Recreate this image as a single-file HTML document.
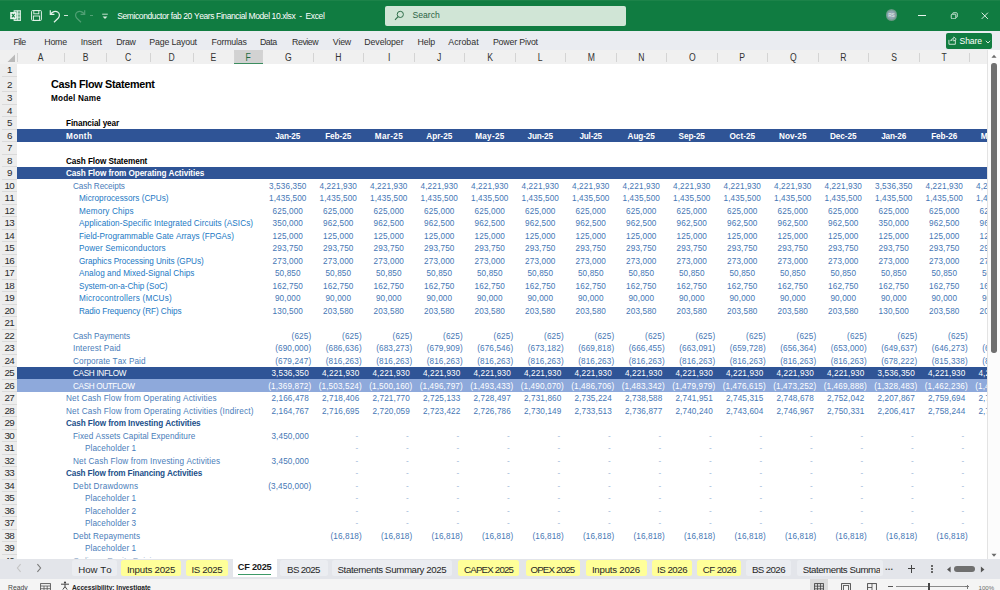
<!DOCTYPE html>
<html lang="en"><head><meta charset="utf-8"><title>Semiconductor fab 20 Years Financial Model 10.xlsx - Excel</title>
<style>
html,body{margin:0;padding:0;}
body{width:1000px;height:590px;overflow:hidden;position:relative;background:#fff;font-family:"Liberation Sans",sans-serif;font-kerning:none;}
div,span{box-sizing:border-box;}
.a{position:absolute;white-space:pre;}
.t{position:absolute;white-space:pre;line-height:1;}
#title{left:0;top:0;width:1000px;height:31px;background:#107C41;}
#ribbon{left:0;top:31px;width:1000px;height:19px;background:#EAECF1;}
.rt{position:absolute;top:37.1px;font-size:8.8px;color:#2f2f2f;white-space:pre;line-height:10px;}
#colhdr{left:0;top:50px;width:987px;height:13.5px;background:#F0F0F0;}
.ch{position:absolute;top:53.3px;font-size:10px;color:#2b2b2b;line-height:10px;text-align:center;white-space:pre;transform:scaleX(0.86);}
.cs{position:absolute;top:52.5px;width:1px;height:9.5px;background:#d4d4d4;}
#rowhdr{left:0;top:63.5px;width:17.5px;height:495px;background:#EDEDED;overflow:hidden;border-right:1px solid #cfcfcf;}
.rn{position:absolute;left:0.6px;width:17.5px;text-align:center;font-size:9.8px;color:#2b2b2b;line-height:12.5px;white-space:pre;letter-spacing:-0.7px;}
.rs{position:absolute;left:2px;width:15px;height:1px;background:#dadada;}
#sheet{left:17px;top:63.5px;width:970px;height:495.5px;overflow:hidden;background:#fff;}
.band{position:absolute;left:0;width:970px;}
.c{position:absolute;white-space:pre;line-height:12.5px;font-size:8.2px;}
.n{position:absolute;white-space:pre;line-height:12.5px;font-size:8.2px;text-align:right;width:50.5px;}
.nc{text-align:center;}
.m{position:absolute;white-space:pre;line-height:12.5px;font-size:8.2px;text-align:center;width:50.5px;color:#fff;font-weight:700;}
#tabs{left:0;top:558.5px;width:1000px;height:20.2px;background:#E3E5EA;}
.tab{position:absolute;top:560.4px;height:15.4px;font-size:9px;color:#262626;line-height:15.5px;text-align:center;white-space:pre;border-radius:2.5px;}
.y{background:#FFFF99;}
.tt{top:561.8px;text-align:left;background:none;}
.pill{background:#EBEDF1;}
#status{left:0;top:578.7px;width:1000px;height:11.3px;background:#F4F4F4;}
.st{position:absolute;font-size:6.8px;color:#444;line-height:8px;white-space:pre;}
</style></head><body>

<div id="title" class="a"></div>
<div class="a" style="left:0;top:0;width:1000px;height:1px;background:#1c8349"></div>
<svg class="a" style="left:10px;top:9.8px" width="11.2" height="11.2" viewBox="0 0 12 12">
<rect x="4.4" y="0.8" width="7" height="10.4" fill="#e4f2ea" fill-opacity="0.45" stroke="#e4f2ea" stroke-width="1"/>
<line x1="8" y1="0.8" x2="8" y2="11.2" stroke="#e4f2ea" stroke-width="0.9"/>
<line x1="4.4" y1="4.3" x2="11.4" y2="4.3" stroke="#e4f2ea" stroke-width="0.9"/>
<line x1="4.4" y1="7.7" x2="11.4" y2="7.7" stroke="#e4f2ea" stroke-width="0.9"/>
<rect x="0.2" y="2.2" width="6.6" height="7.6" fill="#e9f6ee"/>
<path d="M2 4.2 L5 7.9 M5 4.2 L2 7.9" stroke="#107C41" stroke-width="1.1" fill="none"/>
</svg>
<svg class="a" style="left:31px;top:10px" width="11" height="11" viewBox="0 0 11 11">
<rect x="0.6" y="0.6" width="9.8" height="9.8" rx="0.8" fill="none" stroke="#e4f2ea" stroke-width="1"/>
<rect x="2.8" y="0.6" width="5" height="3.2" fill="none" stroke="#e4f2ea" stroke-width="0.9"/>
<rect x="2.4" y="6" width="6.2" height="4.4" fill="none" stroke="#e4f2ea" stroke-width="0.9"/>
</svg>
<svg class="a" style="left:49.2px;top:9px" width="13" height="14.2" viewBox="0 0 12 13">
<path d="M1.2 1.2 V5 H5" fill="none" stroke="#e4f2ea" stroke-width="1.1"/>
<path d="M1.5 4.8 C3 2.2 6 1.5 8 2.7 C10.2 4 10 6.8 8.4 8.5 L4.6 12.2" fill="none" stroke="#e4f2ea" stroke-width="1.1"/>
</svg>
<div class="a" style="left:64.3px;top:14.5px;width:4px;height:1.3px;background:#cfe6d8"></div>
<svg class="a" style="left:72.8px;top:9px;opacity:.3" width="13" height="14.2" viewBox="0 0 12 13">
<path d="M10.8 1.2 V5 H7" fill="none" stroke="#e4f2ea" stroke-width="1.1"/>
<path d="M10.5 4.8 C9 2.2 6 1.5 4 2.7 C1.8 4 2 6.8 3.6 8.5 L7.4 12.2" fill="none" stroke="#e4f2ea" stroke-width="1.1"/>
</svg>
<div class="a" style="left:89.8px;top:14.5px;width:3.5px;height:1.2px;background:#cfe6d8;opacity:.35"></div>
<svg class="a" style="left:100.5px;top:12.5px" width="8" height="7" viewBox="0 0 8 7">
<line x1="1.2" y1="1.2" x2="6.8" y2="1.2" stroke="#d9ecdf" stroke-width="0.9"/>
<path d="M1.6 3.4 L4 5.9 L6.4 3.4 Z" fill="#d9ecdf"/>
</svg>
<div class="t" style="left:117.2px;top:10.8px;font-size:8.5px;color:#fff;line-height:10px;letter-spacing:-0.397px">Semiconductor fab 20 Years Financial Model 10.xlsx  -  Excel</div>
<div class="a" style="left:385px;top:5.5px;width:240.5px;height:20.5px;background:#D0E5D6;border-radius:2px"></div>
<svg class="a" style="left:394px;top:10px" width="11" height="11" viewBox="0 0 11 11">
<circle cx="6.3" cy="4.4" r="3.1" fill="none" stroke="#2f6f4b" stroke-width="1"/>
<line x1="4.1" y1="6.7" x2="1" y2="9.9" stroke="#2f6f4b" stroke-width="1.1"/>
</svg>
<div class="t" style="left:412.5px;top:9.8px;font-size:8.6px;color:#2a6345;line-height:10px">Search</div>
<div class="a" style="left:885.7px;top:9.1px;width:11.6px;height:11.6px;border-radius:6px;background:radial-gradient(circle,#9fb2bf 0%,#8fa5b0 45%,#4f9069 80%,#3f8a5e 100%)"></div>
<div class="t" style="left:885.5px;top:12.5px;width:12px;text-align:center;font-size:4.6px;color:#e6efe9;line-height:5px">RS</div>
<div class="a" style="left:918px;top:14.5px;width:8px;height:1.2px;background:#e9f5ee"></div>
<svg class="a" style="left:949.5px;top:11.5px" width="8.5" height="7.5" viewBox="0 0 10 10">
<rect x="1" y="3" width="6" height="6" rx="1.2" fill="none" stroke="#e9f5ee" stroke-width="1.1"/>
<path d="M3 2.6 V1.8 Q3 1 3.8 1 H8 Q9 1 9 2 V6.2 Q9 7 8.2 7 H7.4" fill="none" stroke="#e9f5ee" stroke-width="1.1"/>
</svg>
<svg class="a" style="left:981.2px;top:11.5px" width="7.6" height="7.6" viewBox="0 0 9 9">
<path d="M0.8 0.8 L8.2 8.2 M8.2 0.8 L0.8 8.2" stroke="#e9f5ee" stroke-width="1.1" fill="none"/>
</svg>
<div id="ribbon" class="a"></div>
<div class="rt" style="left:13.5px;letter-spacing:-0.545px">File</div>
<div class="rt" style="left:44.3px;letter-spacing:-0.218px">Home</div>
<div class="rt" style="left:80.7px;letter-spacing:-0.168px">Insert</div>
<div class="rt" style="left:116.3px;letter-spacing:-0.309px">Draw</div>
<div class="rt" style="left:149.3px;letter-spacing:-0.165px">Page Layout</div>
<div class="rt" style="left:211.5px;letter-spacing:-0.184px">Formulas</div>
<div class="rt" style="left:259.9px;letter-spacing:-0.447px">Data</div>
<div class="rt" style="left:292.1px;letter-spacing:-0.476px">Review</div>
<div class="rt" style="left:332.7px;letter-spacing:-0.179px">View</div>
<div class="rt" style="left:364.3px;letter-spacing:-0.101px">Developer</div>
<div class="rt" style="left:417.5px;letter-spacing:-0.175px">Help</div>
<div class="rt" style="left:448.3px;letter-spacing:-0.004px">Acrobat</div>
<div class="rt" style="left:492.9px;letter-spacing:-0.177px">Power Pivot</div>
<div class="a" style="left:946px;top:33.2px;width:46.3px;height:15.5px;background:#107C41;border-radius:2px"></div>
<svg class="a" style="left:947.8px;top:36.3px" width="9.2" height="9.2" viewBox="0 0 10 10">
<path d="M1 4.2 V9 H8 V4.2" fill="none" stroke="#e9f5ee" stroke-width="0.9"/>
<path d="M3 5.5 C3.2 3.5 4.6 2.6 6.3 2.6 V1 L9 3.4 L6.3 5.6 V4.1 C5 4.1 3.8 4.4 3 5.5 Z" fill="none" stroke="#e9f5ee" stroke-width="0.8"/>
</svg>
<div class="t" style="left:959.6px;top:35.8px;font-size:8.6px;color:#fff;line-height:10px;letter-spacing:-0.12px">Share</div>
<svg class="a" style="left:985px;top:39.5px" width="6" height="4" viewBox="0 0 6 4"><path d="M0.8 0.8 L3 3 L5.2 0.8" fill="none" stroke="#e9f5ee" stroke-width="0.9"/></svg>
<div id="colhdr" class="a"></div>
<div class="a" style="left:987px;top:50px;width:13px;height:509px;background:#FCFCFC;border-left:1px solid #E3E3E3"></div>
<div class="a" style="left:234px;top:50px;width:28.5px;height:13.5px;background:#D2D2D2;border-bottom:1.5px solid #3c8d5f"></div>
<svg class="a" style="left:7px;top:54px" width="9" height="9" viewBox="0 0 9 9"><path d="M8 0.5 V8 H0.5 Z" fill="#b9b9b9"/></svg>
<div class="ch" style="left:17px;width:47.5px;color:#333">A</div>
<div class="ch" style="left:64.5px;width:41.5px;color:#333">B</div>
<div class="ch" style="left:106px;width:44px;color:#333">C</div>
<div class="ch" style="left:150px;width:43px;color:#333">D</div>
<div class="ch" style="left:193px;width:41px;color:#333">E</div>
<div class="ch" style="left:234px;width:28.5px;color:#1e6b41">F</div>
<div class="ch" style="left:262.5px;width:50.5px;color:#333">G</div>
<div class="ch" style="left:313.0px;width:50.5px;color:#333">H</div>
<div class="ch" style="left:363.5px;width:50.5px;color:#333">I</div>
<div class="ch" style="left:414.0px;width:50.5px;color:#333">J</div>
<div class="ch" style="left:464.5px;width:50.5px;color:#333">K</div>
<div class="ch" style="left:515.0px;width:50.5px;color:#333">L</div>
<div class="ch" style="left:565.5px;width:50.5px;color:#333">M</div>
<div class="ch" style="left:616.0px;width:50.5px;color:#333">N</div>
<div class="ch" style="left:666.5px;width:50.5px;color:#333">O</div>
<div class="ch" style="left:717.0px;width:50.5px;color:#333">P</div>
<div class="ch" style="left:767.5px;width:50.5px;color:#333">Q</div>
<div class="ch" style="left:818.0px;width:50.5px;color:#333">R</div>
<div class="ch" style="left:868.5px;width:50.5px;color:#333">S</div>
<div class="ch" style="left:919.0px;width:50.5px;color:#333">T</div>
<div class="cs" style="left:16.5px"></div>
<div class="cs" style="left:64.0px"></div>
<div class="cs" style="left:105.5px"></div>
<div class="cs" style="left:149.5px"></div>
<div class="cs" style="left:192.5px"></div>
<div class="cs" style="left:233.5px"></div>
<div class="cs" style="left:262.0px"></div>
<div class="cs" style="left:312.5px"></div>
<div class="cs" style="left:363.0px"></div>
<div class="cs" style="left:413.5px"></div>
<div class="cs" style="left:464.0px"></div>
<div class="cs" style="left:514.5px"></div>
<div class="cs" style="left:565.0px"></div>
<div class="cs" style="left:615.5px"></div>
<div class="cs" style="left:666.0px"></div>
<div class="cs" style="left:716.5px"></div>
<div class="cs" style="left:767.0px"></div>
<div class="cs" style="left:817.5px"></div>
<div class="cs" style="left:868.0px"></div>
<div class="cs" style="left:918.5px"></div>
<div class="cs" style="left:969.0px"></div>
<div id="rowhdr" class="a">
<div class="rn" style="top:0.5px">1</div>
<div class="rs" style="top:12.0px"></div>
<div class="rn" style="top:15.1px">2</div>
<div class="rs" style="top:27.5px"></div>
<div class="rn" style="top:28.5px">3</div>
<div class="rs" style="top:40.0px"></div>
<div class="rn" style="top:41.0px">4</div>
<div class="rs" style="top:52.5px"></div>
<div class="rn" style="top:53.5px">5</div>
<div class="rs" style="top:65.0px"></div>
<div class="rn" style="top:66.0px">6</div>
<div class="rs" style="top:77.5px"></div>
<div class="rn" style="top:78.5px">7</div>
<div class="rs" style="top:90.0px"></div>
<div class="rn" style="top:91.0px">8</div>
<div class="rs" style="top:102.5px"></div>
<div class="rn" style="top:103.5px">9</div>
<div class="rs" style="top:115.0px"></div>
<div class="rn" style="top:116.0px">10</div>
<div class="rs" style="top:127.5px"></div>
<div class="rn" style="top:128.5px">11</div>
<div class="rs" style="top:140.0px"></div>
<div class="rn" style="top:141.0px">12</div>
<div class="rs" style="top:152.5px"></div>
<div class="rn" style="top:153.5px">13</div>
<div class="rs" style="top:165.0px"></div>
<div class="rn" style="top:166.0px">14</div>
<div class="rs" style="top:177.5px"></div>
<div class="rn" style="top:178.5px">15</div>
<div class="rs" style="top:190.0px"></div>
<div class="rn" style="top:191.0px">16</div>
<div class="rs" style="top:202.5px"></div>
<div class="rn" style="top:203.5px">17</div>
<div class="rs" style="top:215.0px"></div>
<div class="rn" style="top:216.0px">18</div>
<div class="rs" style="top:227.5px"></div>
<div class="rn" style="top:228.5px">19</div>
<div class="rs" style="top:240.0px"></div>
<div class="rn" style="top:241.0px">20</div>
<div class="rs" style="top:252.5px"></div>
<div class="rn" style="top:253.5px">21</div>
<div class="rs" style="top:265.0px"></div>
<div class="rn" style="top:266.0px">22</div>
<div class="rs" style="top:277.5px"></div>
<div class="rn" style="top:278.5px">23</div>
<div class="rs" style="top:290.0px"></div>
<div class="rn" style="top:291.0px">24</div>
<div class="rs" style="top:302.5px"></div>
<div class="rn" style="top:303.5px">25</div>
<div class="rs" style="top:315.0px"></div>
<div class="rn" style="top:316.0px">26</div>
<div class="rs" style="top:327.5px"></div>
<div class="rn" style="top:328.5px">27</div>
<div class="rs" style="top:340.0px"></div>
<div class="rn" style="top:341.0px">28</div>
<div class="rs" style="top:352.5px"></div>
<div class="rn" style="top:353.5px">29</div>
<div class="rs" style="top:365.0px"></div>
<div class="rn" style="top:366.0px">30</div>
<div class="rs" style="top:377.5px"></div>
<div class="rn" style="top:378.5px">31</div>
<div class="rs" style="top:390.0px"></div>
<div class="rn" style="top:391.0px">32</div>
<div class="rs" style="top:402.5px"></div>
<div class="rn" style="top:403.5px">33</div>
<div class="rs" style="top:415.0px"></div>
<div class="rn" style="top:416.0px">34</div>
<div class="rs" style="top:427.5px"></div>
<div class="rn" style="top:428.5px">35</div>
<div class="rs" style="top:440.0px"></div>
<div class="rn" style="top:441.0px">36</div>
<div class="rs" style="top:452.5px"></div>
<div class="rn" style="top:453.5px">37</div>
<div class="rs" style="top:465.0px"></div>
<div class="rn" style="top:466.0px">38</div>
<div class="rs" style="top:477.5px"></div>
<div class="rn" style="top:478.5px">39</div>
<div class="rs" style="top:490.0px"></div>
<div class="rn" style="top:491.0px">40</div>
<div class="rs" style="top:502.5px"></div>
</div>
<div id="sheet" class="a">
<div class="band" style="top:65.5px;height:12.5px;background:#2F5496"></div>
<div class="band" style="top:103.0px;height:12.5px;background:#2F5496"></div>
<div class="band" style="top:303.0px;height:12.5px;background:#2F5496"></div>
<div class="band" style="top:315.5px;height:12.5px;background:#8EA9DB"></div>
<div class="c" style="left:34.0px;top:13.6px;color:#000;letter-spacing:-0.300px;font-weight:700;font-size:10.8px;line-height:15.5px;">Cash Flow Statement</div>
<div class="c" style="left:34.0px;top:29.8px;color:#000;letter-spacing:0.174px;font-weight:700;">Model Name</div>
<div class="c" style="left:49.0px;top:54.8px;color:#000;letter-spacing:-0.110px;font-weight:700;">Financial year</div>
<div class="c" style="left:49.0px;top:67.3px;color:#fff;letter-spacing:0.339px;font-weight:700;">Month</div>
<div class="c" style="left:49.0px;top:92.3px;color:#000;letter-spacing:-0.084px;font-weight:700;">Cash Flow Statement</div>
<div class="c" style="left:49.0px;top:104.8px;color:#fff;letter-spacing:-0.083px;font-weight:700;">Cash Flow from Operating Activities</div>
<div class="m" style="left:245.41px;top:67.3px;letter-spacing:-0.180px">Jan-25</div>
<div class="m" style="left:295.98px;top:67.3px;letter-spacing:-0.045px">Feb-25</div>
<div class="m" style="left:346.65px;top:67.3px;letter-spacing:0.301px">Mar-25</div>
<div class="m" style="left:397.01px;top:67.3px;letter-spacing:0.029px">Apr-25</div>
<div class="m" style="left:447.63px;top:67.3px;letter-spacing:0.256px">May-25</div>
<div class="m" style="left:497.91px;top:67.3px;letter-spacing:-0.189px">Jun-25</div>
<div class="m" style="left:548.41px;top:67.3px;letter-spacing:-0.184px">Jul-25</div>
<div class="m" style="left:598.95px;top:67.3px;letter-spacing:-0.091px">Aug-25</div>
<div class="m" style="left:649.45px;top:67.3px;letter-spacing:-0.101px">Sep-25</div>
<div class="m" style="left:700.01px;top:67.3px;letter-spacing:0.017px">Oct-25</div>
<div class="m" style="left:750.53px;top:67.3px;letter-spacing:0.067px">Nov-25</div>
<div class="m" style="left:800.98px;top:67.3px;letter-spacing:-0.041px">Dec-25</div>
<div class="m" style="left:851.41px;top:67.3px;letter-spacing:-0.180px">Jan-26</div>
<div class="m" style="left:901.98px;top:67.3px;letter-spacing:-0.045px">Feb-26</div>
<div class="m" style="left:952.65px;top:67.3px;letter-spacing:0.301px">Mar-26</div>
<div class="c" style="left:56.0px;top:117.3px;color:#4A7DBA;letter-spacing:-0.107px;">Cash Receipts</div>
<div class="n nc" style="left:245.56px;top:117.3px;color:#4677B5;letter-spacing:0.119px">3,536,350</div>
<div class="n nc" style="left:296.06px;top:117.3px;color:#4677B5;letter-spacing:0.119px">4,221,930</div>
<div class="n nc" style="left:346.56px;top:117.3px;color:#4677B5;letter-spacing:0.119px">4,221,930</div>
<div class="n nc" style="left:397.06px;top:117.3px;color:#4677B5;letter-spacing:0.119px">4,221,930</div>
<div class="n nc" style="left:447.56px;top:117.3px;color:#4677B5;letter-spacing:0.119px">4,221,930</div>
<div class="n nc" style="left:498.06px;top:117.3px;color:#4677B5;letter-spacing:0.119px">4,221,930</div>
<div class="n nc" style="left:548.56px;top:117.3px;color:#4677B5;letter-spacing:0.119px">4,221,930</div>
<div class="n nc" style="left:599.06px;top:117.3px;color:#4677B5;letter-spacing:0.119px">4,221,930</div>
<div class="n nc" style="left:649.56px;top:117.3px;color:#4677B5;letter-spacing:0.119px">4,221,930</div>
<div class="n nc" style="left:700.06px;top:117.3px;color:#4677B5;letter-spacing:0.119px">4,221,930</div>
<div class="n nc" style="left:750.56px;top:117.3px;color:#4677B5;letter-spacing:0.119px">4,221,930</div>
<div class="n nc" style="left:801.06px;top:117.3px;color:#4677B5;letter-spacing:0.119px">4,221,930</div>
<div class="n nc" style="left:851.56px;top:117.3px;color:#4677B5;letter-spacing:0.119px">3,536,350</div>
<div class="n nc" style="left:902.06px;top:117.3px;color:#4677B5;letter-spacing:0.119px">4,221,930</div>
<div class="n nc" style="left:952.56px;top:117.3px;color:#4677B5;letter-spacing:0.119px">4,221,930</div>
<div class="c" style="left:62.0px;top:129.8px;color:#1A78C4;letter-spacing:0.020px;">Microprocessors (CPUs)</div>
<div class="n nc" style="left:245.56px;top:129.8px;color:#4677B5;letter-spacing:0.119px">1,435,500</div>
<div class="n nc" style="left:296.06px;top:129.8px;color:#4677B5;letter-spacing:0.119px">1,435,500</div>
<div class="n nc" style="left:346.56px;top:129.8px;color:#4677B5;letter-spacing:0.119px">1,435,500</div>
<div class="n nc" style="left:397.06px;top:129.8px;color:#4677B5;letter-spacing:0.119px">1,435,500</div>
<div class="n nc" style="left:447.56px;top:129.8px;color:#4677B5;letter-spacing:0.119px">1,435,500</div>
<div class="n nc" style="left:498.06px;top:129.8px;color:#4677B5;letter-spacing:0.119px">1,435,500</div>
<div class="n nc" style="left:548.56px;top:129.8px;color:#4677B5;letter-spacing:0.119px">1,435,500</div>
<div class="n nc" style="left:599.06px;top:129.8px;color:#4677B5;letter-spacing:0.119px">1,435,500</div>
<div class="n nc" style="left:649.56px;top:129.8px;color:#4677B5;letter-spacing:0.119px">1,435,500</div>
<div class="n nc" style="left:700.06px;top:129.8px;color:#4677B5;letter-spacing:0.119px">1,435,500</div>
<div class="n nc" style="left:750.56px;top:129.8px;color:#4677B5;letter-spacing:0.119px">1,435,500</div>
<div class="n nc" style="left:801.06px;top:129.8px;color:#4677B5;letter-spacing:0.119px">1,435,500</div>
<div class="n nc" style="left:851.56px;top:129.8px;color:#4677B5;letter-spacing:0.119px">1,435,500</div>
<div class="n nc" style="left:902.06px;top:129.8px;color:#4677B5;letter-spacing:0.119px">1,435,500</div>
<div class="n nc" style="left:952.56px;top:129.8px;color:#4677B5;letter-spacing:0.119px">1,435,500</div>
<div class="c" style="left:62.0px;top:142.3px;color:#1A78C4;letter-spacing:0.166px;">Memory Chips</div>
<div class="n nc" style="left:245.56px;top:142.3px;color:#4677B5;letter-spacing:0.128px">625,000</div>
<div class="n nc" style="left:296.06px;top:142.3px;color:#4677B5;letter-spacing:0.128px">625,000</div>
<div class="n nc" style="left:346.56px;top:142.3px;color:#4677B5;letter-spacing:0.128px">625,000</div>
<div class="n nc" style="left:397.06px;top:142.3px;color:#4677B5;letter-spacing:0.128px">625,000</div>
<div class="n nc" style="left:447.56px;top:142.3px;color:#4677B5;letter-spacing:0.128px">625,000</div>
<div class="n nc" style="left:498.06px;top:142.3px;color:#4677B5;letter-spacing:0.128px">625,000</div>
<div class="n nc" style="left:548.56px;top:142.3px;color:#4677B5;letter-spacing:0.128px">625,000</div>
<div class="n nc" style="left:599.06px;top:142.3px;color:#4677B5;letter-spacing:0.128px">625,000</div>
<div class="n nc" style="left:649.56px;top:142.3px;color:#4677B5;letter-spacing:0.128px">625,000</div>
<div class="n nc" style="left:700.06px;top:142.3px;color:#4677B5;letter-spacing:0.128px">625,000</div>
<div class="n nc" style="left:750.56px;top:142.3px;color:#4677B5;letter-spacing:0.128px">625,000</div>
<div class="n nc" style="left:801.06px;top:142.3px;color:#4677B5;letter-spacing:0.128px">625,000</div>
<div class="n nc" style="left:851.56px;top:142.3px;color:#4677B5;letter-spacing:0.128px">625,000</div>
<div class="n nc" style="left:902.06px;top:142.3px;color:#4677B5;letter-spacing:0.128px">625,000</div>
<div class="n nc" style="left:952.56px;top:142.3px;color:#4677B5;letter-spacing:0.128px">625,000</div>
<div class="c" style="left:62.0px;top:154.8px;color:#1A78C4;letter-spacing:0.062px;">Application-Specific Integrated Circuits (ASICs)</div>
<div class="n nc" style="left:245.56px;top:154.8px;color:#4677B5;letter-spacing:0.128px">350,000</div>
<div class="n nc" style="left:296.06px;top:154.8px;color:#4677B5;letter-spacing:0.128px">962,500</div>
<div class="n nc" style="left:346.56px;top:154.8px;color:#4677B5;letter-spacing:0.128px">962,500</div>
<div class="n nc" style="left:397.06px;top:154.8px;color:#4677B5;letter-spacing:0.128px">962,500</div>
<div class="n nc" style="left:447.56px;top:154.8px;color:#4677B5;letter-spacing:0.128px">962,500</div>
<div class="n nc" style="left:498.06px;top:154.8px;color:#4677B5;letter-spacing:0.128px">962,500</div>
<div class="n nc" style="left:548.56px;top:154.8px;color:#4677B5;letter-spacing:0.128px">962,500</div>
<div class="n nc" style="left:599.06px;top:154.8px;color:#4677B5;letter-spacing:0.128px">962,500</div>
<div class="n nc" style="left:649.56px;top:154.8px;color:#4677B5;letter-spacing:0.128px">962,500</div>
<div class="n nc" style="left:700.06px;top:154.8px;color:#4677B5;letter-spacing:0.128px">962,500</div>
<div class="n nc" style="left:750.56px;top:154.8px;color:#4677B5;letter-spacing:0.128px">962,500</div>
<div class="n nc" style="left:801.06px;top:154.8px;color:#4677B5;letter-spacing:0.128px">962,500</div>
<div class="n nc" style="left:851.56px;top:154.8px;color:#4677B5;letter-spacing:0.128px">350,000</div>
<div class="n nc" style="left:902.06px;top:154.8px;color:#4677B5;letter-spacing:0.128px">962,500</div>
<div class="n nc" style="left:952.56px;top:154.8px;color:#4677B5;letter-spacing:0.128px">962,500</div>
<div class="c" style="left:62.0px;top:167.3px;color:#1A78C4;letter-spacing:0.018px;">Field-Programmable Gate Arrays (FPGAs)</div>
<div class="n nc" style="left:245.56px;top:167.3px;color:#4677B5;letter-spacing:0.128px">125,000</div>
<div class="n nc" style="left:296.06px;top:167.3px;color:#4677B5;letter-spacing:0.128px">125,000</div>
<div class="n nc" style="left:346.56px;top:167.3px;color:#4677B5;letter-spacing:0.128px">125,000</div>
<div class="n nc" style="left:397.06px;top:167.3px;color:#4677B5;letter-spacing:0.128px">125,000</div>
<div class="n nc" style="left:447.56px;top:167.3px;color:#4677B5;letter-spacing:0.128px">125,000</div>
<div class="n nc" style="left:498.06px;top:167.3px;color:#4677B5;letter-spacing:0.128px">125,000</div>
<div class="n nc" style="left:548.56px;top:167.3px;color:#4677B5;letter-spacing:0.128px">125,000</div>
<div class="n nc" style="left:599.06px;top:167.3px;color:#4677B5;letter-spacing:0.128px">125,000</div>
<div class="n nc" style="left:649.56px;top:167.3px;color:#4677B5;letter-spacing:0.128px">125,000</div>
<div class="n nc" style="left:700.06px;top:167.3px;color:#4677B5;letter-spacing:0.128px">125,000</div>
<div class="n nc" style="left:750.56px;top:167.3px;color:#4677B5;letter-spacing:0.128px">125,000</div>
<div class="n nc" style="left:801.06px;top:167.3px;color:#4677B5;letter-spacing:0.128px">125,000</div>
<div class="n nc" style="left:851.56px;top:167.3px;color:#4677B5;letter-spacing:0.128px">125,000</div>
<div class="n nc" style="left:902.06px;top:167.3px;color:#4677B5;letter-spacing:0.128px">125,000</div>
<div class="n nc" style="left:952.56px;top:167.3px;color:#4677B5;letter-spacing:0.128px">125,000</div>
<div class="c" style="left:62.0px;top:179.8px;color:#1A78C4;letter-spacing:0.131px;">Power Semiconductors</div>
<div class="n nc" style="left:245.56px;top:179.8px;color:#4677B5;letter-spacing:0.128px">293,750</div>
<div class="n nc" style="left:296.06px;top:179.8px;color:#4677B5;letter-spacing:0.128px">293,750</div>
<div class="n nc" style="left:346.56px;top:179.8px;color:#4677B5;letter-spacing:0.128px">293,750</div>
<div class="n nc" style="left:397.06px;top:179.8px;color:#4677B5;letter-spacing:0.128px">293,750</div>
<div class="n nc" style="left:447.56px;top:179.8px;color:#4677B5;letter-spacing:0.128px">293,750</div>
<div class="n nc" style="left:498.06px;top:179.8px;color:#4677B5;letter-spacing:0.128px">293,750</div>
<div class="n nc" style="left:548.56px;top:179.8px;color:#4677B5;letter-spacing:0.128px">293,750</div>
<div class="n nc" style="left:599.06px;top:179.8px;color:#4677B5;letter-spacing:0.128px">293,750</div>
<div class="n nc" style="left:649.56px;top:179.8px;color:#4677B5;letter-spacing:0.128px">293,750</div>
<div class="n nc" style="left:700.06px;top:179.8px;color:#4677B5;letter-spacing:0.128px">293,750</div>
<div class="n nc" style="left:750.56px;top:179.8px;color:#4677B5;letter-spacing:0.128px">293,750</div>
<div class="n nc" style="left:801.06px;top:179.8px;color:#4677B5;letter-spacing:0.128px">293,750</div>
<div class="n nc" style="left:851.56px;top:179.8px;color:#4677B5;letter-spacing:0.128px">293,750</div>
<div class="n nc" style="left:902.06px;top:179.8px;color:#4677B5;letter-spacing:0.128px">293,750</div>
<div class="n nc" style="left:952.56px;top:179.8px;color:#4677B5;letter-spacing:0.128px">293,750</div>
<div class="c" style="left:62.0px;top:192.3px;color:#1A78C4;letter-spacing:-0.041px;">Graphics Processing Units (GPUs)</div>
<div class="n nc" style="left:245.56px;top:192.3px;color:#4677B5;letter-spacing:0.128px">273,000</div>
<div class="n nc" style="left:296.06px;top:192.3px;color:#4677B5;letter-spacing:0.128px">273,000</div>
<div class="n nc" style="left:346.56px;top:192.3px;color:#4677B5;letter-spacing:0.128px">273,000</div>
<div class="n nc" style="left:397.06px;top:192.3px;color:#4677B5;letter-spacing:0.128px">273,000</div>
<div class="n nc" style="left:447.56px;top:192.3px;color:#4677B5;letter-spacing:0.128px">273,000</div>
<div class="n nc" style="left:498.06px;top:192.3px;color:#4677B5;letter-spacing:0.128px">273,000</div>
<div class="n nc" style="left:548.56px;top:192.3px;color:#4677B5;letter-spacing:0.128px">273,000</div>
<div class="n nc" style="left:599.06px;top:192.3px;color:#4677B5;letter-spacing:0.128px">273,000</div>
<div class="n nc" style="left:649.56px;top:192.3px;color:#4677B5;letter-spacing:0.128px">273,000</div>
<div class="n nc" style="left:700.06px;top:192.3px;color:#4677B5;letter-spacing:0.128px">273,000</div>
<div class="n nc" style="left:750.56px;top:192.3px;color:#4677B5;letter-spacing:0.128px">273,000</div>
<div class="n nc" style="left:801.06px;top:192.3px;color:#4677B5;letter-spacing:0.128px">273,000</div>
<div class="n nc" style="left:851.56px;top:192.3px;color:#4677B5;letter-spacing:0.128px">273,000</div>
<div class="n nc" style="left:902.06px;top:192.3px;color:#4677B5;letter-spacing:0.128px">273,000</div>
<div class="n nc" style="left:952.56px;top:192.3px;color:#4677B5;letter-spacing:0.128px">273,000</div>
<div class="c" style="left:62.0px;top:204.8px;color:#1A78C4;letter-spacing:0.043px;">Analog and Mixed-Signal Chips</div>
<div class="n nc" style="left:245.56px;top:204.8px;color:#4677B5;letter-spacing:0.125px">50,850</div>
<div class="n nc" style="left:296.06px;top:204.8px;color:#4677B5;letter-spacing:0.125px">50,850</div>
<div class="n nc" style="left:346.56px;top:204.8px;color:#4677B5;letter-spacing:0.125px">50,850</div>
<div class="n nc" style="left:397.06px;top:204.8px;color:#4677B5;letter-spacing:0.125px">50,850</div>
<div class="n nc" style="left:447.56px;top:204.8px;color:#4677B5;letter-spacing:0.125px">50,850</div>
<div class="n nc" style="left:498.06px;top:204.8px;color:#4677B5;letter-spacing:0.125px">50,850</div>
<div class="n nc" style="left:548.56px;top:204.8px;color:#4677B5;letter-spacing:0.125px">50,850</div>
<div class="n nc" style="left:599.06px;top:204.8px;color:#4677B5;letter-spacing:0.125px">50,850</div>
<div class="n nc" style="left:649.56px;top:204.8px;color:#4677B5;letter-spacing:0.125px">50,850</div>
<div class="n nc" style="left:700.06px;top:204.8px;color:#4677B5;letter-spacing:0.125px">50,850</div>
<div class="n nc" style="left:750.56px;top:204.8px;color:#4677B5;letter-spacing:0.125px">50,850</div>
<div class="n nc" style="left:801.06px;top:204.8px;color:#4677B5;letter-spacing:0.125px">50,850</div>
<div class="n nc" style="left:851.56px;top:204.8px;color:#4677B5;letter-spacing:0.125px">50,850</div>
<div class="n nc" style="left:902.06px;top:204.8px;color:#4677B5;letter-spacing:0.125px">50,850</div>
<div class="n nc" style="left:952.56px;top:204.8px;color:#4677B5;letter-spacing:0.125px">50,850</div>
<div class="c" style="left:62.0px;top:217.3px;color:#1A78C4;letter-spacing:-0.052px;">System-on-a-Chip (SoC)</div>
<div class="n nc" style="left:245.56px;top:217.3px;color:#4677B5;letter-spacing:0.128px">162,750</div>
<div class="n nc" style="left:296.06px;top:217.3px;color:#4677B5;letter-spacing:0.128px">162,750</div>
<div class="n nc" style="left:346.56px;top:217.3px;color:#4677B5;letter-spacing:0.128px">162,750</div>
<div class="n nc" style="left:397.06px;top:217.3px;color:#4677B5;letter-spacing:0.128px">162,750</div>
<div class="n nc" style="left:447.56px;top:217.3px;color:#4677B5;letter-spacing:0.128px">162,750</div>
<div class="n nc" style="left:498.06px;top:217.3px;color:#4677B5;letter-spacing:0.128px">162,750</div>
<div class="n nc" style="left:548.56px;top:217.3px;color:#4677B5;letter-spacing:0.128px">162,750</div>
<div class="n nc" style="left:599.06px;top:217.3px;color:#4677B5;letter-spacing:0.128px">162,750</div>
<div class="n nc" style="left:649.56px;top:217.3px;color:#4677B5;letter-spacing:0.128px">162,750</div>
<div class="n nc" style="left:700.06px;top:217.3px;color:#4677B5;letter-spacing:0.128px">162,750</div>
<div class="n nc" style="left:750.56px;top:217.3px;color:#4677B5;letter-spacing:0.128px">162,750</div>
<div class="n nc" style="left:801.06px;top:217.3px;color:#4677B5;letter-spacing:0.128px">162,750</div>
<div class="n nc" style="left:851.56px;top:217.3px;color:#4677B5;letter-spacing:0.128px">162,750</div>
<div class="n nc" style="left:902.06px;top:217.3px;color:#4677B5;letter-spacing:0.128px">162,750</div>
<div class="n nc" style="left:952.56px;top:217.3px;color:#4677B5;letter-spacing:0.128px">162,750</div>
<div class="c" style="left:62.0px;top:229.8px;color:#1A78C4;letter-spacing:0.200px;">Microcontrollers (MCUs)</div>
<div class="n nc" style="left:245.56px;top:229.8px;color:#4677B5;letter-spacing:0.125px">90,000</div>
<div class="n nc" style="left:296.06px;top:229.8px;color:#4677B5;letter-spacing:0.125px">90,000</div>
<div class="n nc" style="left:346.56px;top:229.8px;color:#4677B5;letter-spacing:0.125px">90,000</div>
<div class="n nc" style="left:397.06px;top:229.8px;color:#4677B5;letter-spacing:0.125px">90,000</div>
<div class="n nc" style="left:447.56px;top:229.8px;color:#4677B5;letter-spacing:0.125px">90,000</div>
<div class="n nc" style="left:498.06px;top:229.8px;color:#4677B5;letter-spacing:0.125px">90,000</div>
<div class="n nc" style="left:548.56px;top:229.8px;color:#4677B5;letter-spacing:0.125px">90,000</div>
<div class="n nc" style="left:599.06px;top:229.8px;color:#4677B5;letter-spacing:0.125px">90,000</div>
<div class="n nc" style="left:649.56px;top:229.8px;color:#4677B5;letter-spacing:0.125px">90,000</div>
<div class="n nc" style="left:700.06px;top:229.8px;color:#4677B5;letter-spacing:0.125px">90,000</div>
<div class="n nc" style="left:750.56px;top:229.8px;color:#4677B5;letter-spacing:0.125px">90,000</div>
<div class="n nc" style="left:801.06px;top:229.8px;color:#4677B5;letter-spacing:0.125px">90,000</div>
<div class="n nc" style="left:851.56px;top:229.8px;color:#4677B5;letter-spacing:0.125px">90,000</div>
<div class="n nc" style="left:902.06px;top:229.8px;color:#4677B5;letter-spacing:0.125px">90,000</div>
<div class="n nc" style="left:952.56px;top:229.8px;color:#4677B5;letter-spacing:0.125px">90,000</div>
<div class="c" style="left:62.0px;top:242.3px;color:#1A78C4;letter-spacing:-0.069px;">Radio Frequency (RF) Chips</div>
<div class="n nc" style="left:245.56px;top:242.3px;color:#4677B5;letter-spacing:0.128px">130,500</div>
<div class="n nc" style="left:296.06px;top:242.3px;color:#4677B5;letter-spacing:0.128px">203,580</div>
<div class="n nc" style="left:346.56px;top:242.3px;color:#4677B5;letter-spacing:0.128px">203,580</div>
<div class="n nc" style="left:397.06px;top:242.3px;color:#4677B5;letter-spacing:0.128px">203,580</div>
<div class="n nc" style="left:447.56px;top:242.3px;color:#4677B5;letter-spacing:0.128px">203,580</div>
<div class="n nc" style="left:498.06px;top:242.3px;color:#4677B5;letter-spacing:0.128px">203,580</div>
<div class="n nc" style="left:548.56px;top:242.3px;color:#4677B5;letter-spacing:0.128px">203,580</div>
<div class="n nc" style="left:599.06px;top:242.3px;color:#4677B5;letter-spacing:0.128px">203,580</div>
<div class="n nc" style="left:649.56px;top:242.3px;color:#4677B5;letter-spacing:0.128px">203,580</div>
<div class="n nc" style="left:700.06px;top:242.3px;color:#4677B5;letter-spacing:0.128px">203,580</div>
<div class="n nc" style="left:750.56px;top:242.3px;color:#4677B5;letter-spacing:0.128px">203,580</div>
<div class="n nc" style="left:801.06px;top:242.3px;color:#4677B5;letter-spacing:0.128px">203,580</div>
<div class="n nc" style="left:851.56px;top:242.3px;color:#4677B5;letter-spacing:0.128px">130,500</div>
<div class="n nc" style="left:902.06px;top:242.3px;color:#4677B5;letter-spacing:0.128px">203,580</div>
<div class="n nc" style="left:952.56px;top:242.3px;color:#4677B5;letter-spacing:0.128px">203,580</div>
<div class="c" style="left:56.0px;top:267.3px;color:#4A7DBA;letter-spacing:-0.062px;">Cash Payments</div>
<div class="n" style="left:245.62px;top:267.3px;padding-right:1.8px;color:#4677B5;letter-spacing:0.119px;">(625)</div>
<div class="n" style="left:296.12px;top:267.3px;padding-right:1.8px;color:#4677B5;letter-spacing:0.119px;">(625)</div>
<div class="n" style="left:346.62px;top:267.3px;padding-right:1.8px;color:#4677B5;letter-spacing:0.119px;">(625)</div>
<div class="n" style="left:397.12px;top:267.3px;padding-right:1.8px;color:#4677B5;letter-spacing:0.119px;">(625)</div>
<div class="n" style="left:447.62px;top:267.3px;padding-right:1.8px;color:#4677B5;letter-spacing:0.119px;">(625)</div>
<div class="n" style="left:498.12px;top:267.3px;padding-right:1.8px;color:#4677B5;letter-spacing:0.119px;">(625)</div>
<div class="n" style="left:548.62px;top:267.3px;padding-right:1.8px;color:#4677B5;letter-spacing:0.119px;">(625)</div>
<div class="n" style="left:599.12px;top:267.3px;padding-right:1.8px;color:#4677B5;letter-spacing:0.119px;">(625)</div>
<div class="n" style="left:649.62px;top:267.3px;padding-right:1.8px;color:#4677B5;letter-spacing:0.119px;">(625)</div>
<div class="n" style="left:700.12px;top:267.3px;padding-right:1.8px;color:#4677B5;letter-spacing:0.119px;">(625)</div>
<div class="n" style="left:750.62px;top:267.3px;padding-right:1.8px;color:#4677B5;letter-spacing:0.119px;">(625)</div>
<div class="n" style="left:801.12px;top:267.3px;padding-right:1.8px;color:#4677B5;letter-spacing:0.119px;">(625)</div>
<div class="n" style="left:851.62px;top:267.3px;padding-right:1.8px;color:#4677B5;letter-spacing:0.119px;">(625)</div>
<div class="n" style="left:902.12px;top:267.3px;padding-right:1.8px;color:#4677B5;letter-spacing:0.119px;">(625)</div>
<div class="n" style="left:952.62px;top:267.3px;padding-right:1.8px;color:#4677B5;letter-spacing:0.119px;">(625)</div>
<div class="c" style="left:56.0px;top:279.8px;color:#4A7DBA;letter-spacing:0.141px;">Interest Paid</div>
<div class="n" style="left:245.62px;top:279.8px;padding-right:1.8px;color:#4677B5;letter-spacing:0.118px;">(690,000)</div>
<div class="n" style="left:296.12px;top:279.8px;padding-right:1.8px;color:#4677B5;letter-spacing:0.118px;">(686,636)</div>
<div class="n" style="left:346.62px;top:279.8px;padding-right:1.8px;color:#4677B5;letter-spacing:0.118px;">(683,273)</div>
<div class="n" style="left:397.12px;top:279.8px;padding-right:1.8px;color:#4677B5;letter-spacing:0.118px;">(679,909)</div>
<div class="n" style="left:447.62px;top:279.8px;padding-right:1.8px;color:#4677B5;letter-spacing:0.118px;">(676,546)</div>
<div class="n" style="left:498.12px;top:279.8px;padding-right:1.8px;color:#4677B5;letter-spacing:0.118px;">(673,182)</div>
<div class="n" style="left:548.62px;top:279.8px;padding-right:1.8px;color:#4677B5;letter-spacing:0.118px;">(669,818)</div>
<div class="n" style="left:599.12px;top:279.8px;padding-right:1.8px;color:#4677B5;letter-spacing:0.118px;">(666,455)</div>
<div class="n" style="left:649.62px;top:279.8px;padding-right:1.8px;color:#4677B5;letter-spacing:0.118px;">(663,091)</div>
<div class="n" style="left:700.12px;top:279.8px;padding-right:1.8px;color:#4677B5;letter-spacing:0.118px;">(659,728)</div>
<div class="n" style="left:750.62px;top:279.8px;padding-right:1.8px;color:#4677B5;letter-spacing:0.118px;">(656,364)</div>
<div class="n" style="left:801.12px;top:279.8px;padding-right:1.8px;color:#4677B5;letter-spacing:0.118px;">(653,000)</div>
<div class="n" style="left:851.62px;top:279.8px;padding-right:1.8px;color:#4677B5;letter-spacing:0.118px;">(649,637)</div>
<div class="n" style="left:902.12px;top:279.8px;padding-right:1.8px;color:#4677B5;letter-spacing:0.118px;">(646,273)</div>
<div class="n" style="left:952.62px;top:279.8px;padding-right:1.8px;color:#4677B5;letter-spacing:0.118px;">(642,909)</div>
<div class="c" style="left:56.0px;top:292.3px;color:#4A7DBA;letter-spacing:0.091px;">Corporate Tax Paid</div>
<div class="n" style="left:245.62px;top:292.3px;padding-right:1.8px;color:#4677B5;letter-spacing:0.118px;">(679,247)</div>
<div class="n" style="left:296.12px;top:292.3px;padding-right:1.8px;color:#4677B5;letter-spacing:0.118px;">(816,263)</div>
<div class="n" style="left:346.62px;top:292.3px;padding-right:1.8px;color:#4677B5;letter-spacing:0.118px;">(816,263)</div>
<div class="n" style="left:397.12px;top:292.3px;padding-right:1.8px;color:#4677B5;letter-spacing:0.118px;">(816,263)</div>
<div class="n" style="left:447.62px;top:292.3px;padding-right:1.8px;color:#4677B5;letter-spacing:0.118px;">(816,263)</div>
<div class="n" style="left:498.12px;top:292.3px;padding-right:1.8px;color:#4677B5;letter-spacing:0.118px;">(816,263)</div>
<div class="n" style="left:548.62px;top:292.3px;padding-right:1.8px;color:#4677B5;letter-spacing:0.118px;">(816,263)</div>
<div class="n" style="left:599.12px;top:292.3px;padding-right:1.8px;color:#4677B5;letter-spacing:0.118px;">(816,263)</div>
<div class="n" style="left:649.62px;top:292.3px;padding-right:1.8px;color:#4677B5;letter-spacing:0.118px;">(816,263)</div>
<div class="n" style="left:700.12px;top:292.3px;padding-right:1.8px;color:#4677B5;letter-spacing:0.118px;">(816,263)</div>
<div class="n" style="left:750.62px;top:292.3px;padding-right:1.8px;color:#4677B5;letter-spacing:0.118px;">(816,263)</div>
<div class="n" style="left:801.12px;top:292.3px;padding-right:1.8px;color:#4677B5;letter-spacing:0.118px;">(816,263)</div>
<div class="n" style="left:851.62px;top:292.3px;padding-right:1.8px;color:#4677B5;letter-spacing:0.118px;">(678,222)</div>
<div class="n" style="left:902.12px;top:292.3px;padding-right:1.8px;color:#4677B5;letter-spacing:0.118px;">(815,338)</div>
<div class="n" style="left:952.62px;top:292.3px;padding-right:1.8px;color:#4677B5;letter-spacing:0.118px;">(815,338)</div>
<div class="c" style="left:56.0px;top:304.8px;color:#FFFFFF;letter-spacing:-0.327px;">CASH INFLOW</div>
<div class="n" style="left:245.62px;top:304.8px;padding-right:4.2px;color:#FFFFFF;letter-spacing:0.119px;">3,536,350</div>
<div class="n" style="left:296.12px;top:304.8px;padding-right:4.2px;color:#FFFFFF;letter-spacing:0.119px;">4,221,930</div>
<div class="n" style="left:346.62px;top:304.8px;padding-right:4.2px;color:#FFFFFF;letter-spacing:0.119px;">4,221,930</div>
<div class="n" style="left:397.12px;top:304.8px;padding-right:4.2px;color:#FFFFFF;letter-spacing:0.119px;">4,221,930</div>
<div class="n" style="left:447.62px;top:304.8px;padding-right:4.2px;color:#FFFFFF;letter-spacing:0.119px;">4,221,930</div>
<div class="n" style="left:498.12px;top:304.8px;padding-right:4.2px;color:#FFFFFF;letter-spacing:0.119px;">4,221,930</div>
<div class="n" style="left:548.62px;top:304.8px;padding-right:4.2px;color:#FFFFFF;letter-spacing:0.119px;">4,221,930</div>
<div class="n" style="left:599.12px;top:304.8px;padding-right:4.2px;color:#FFFFFF;letter-spacing:0.119px;">4,221,930</div>
<div class="n" style="left:649.62px;top:304.8px;padding-right:4.2px;color:#FFFFFF;letter-spacing:0.119px;">4,221,930</div>
<div class="n" style="left:700.12px;top:304.8px;padding-right:4.2px;color:#FFFFFF;letter-spacing:0.119px;">4,221,930</div>
<div class="n" style="left:750.62px;top:304.8px;padding-right:4.2px;color:#FFFFFF;letter-spacing:0.119px;">4,221,930</div>
<div class="n" style="left:801.12px;top:304.8px;padding-right:4.2px;color:#FFFFFF;letter-spacing:0.119px;">4,221,930</div>
<div class="n" style="left:851.62px;top:304.8px;padding-right:4.2px;color:#FFFFFF;letter-spacing:0.119px;">3,536,350</div>
<div class="n" style="left:902.12px;top:304.8px;padding-right:4.2px;color:#FFFFFF;letter-spacing:0.119px;">4,221,930</div>
<div class="n" style="left:952.62px;top:304.8px;padding-right:4.2px;color:#FFFFFF;letter-spacing:0.119px;">4,221,930</div>
<div class="c" style="left:56.0px;top:317.3px;color:#FFFFFF;letter-spacing:-0.367px;">CASH OUTFLOW</div>
<div class="n" style="left:245.61px;top:317.3px;padding-right:1.8px;color:#FFFFFF;letter-spacing:0.113px;">(1,369,872)</div>
<div class="n" style="left:296.11px;top:317.3px;padding-right:1.8px;color:#FFFFFF;letter-spacing:0.113px;">(1,503,524)</div>
<div class="n" style="left:346.61px;top:317.3px;padding-right:1.8px;color:#FFFFFF;letter-spacing:0.113px;">(1,500,160)</div>
<div class="n" style="left:397.11px;top:317.3px;padding-right:1.8px;color:#FFFFFF;letter-spacing:0.113px;">(1,496,797)</div>
<div class="n" style="left:447.61px;top:317.3px;padding-right:1.8px;color:#FFFFFF;letter-spacing:0.113px;">(1,493,433)</div>
<div class="n" style="left:498.11px;top:317.3px;padding-right:1.8px;color:#FFFFFF;letter-spacing:0.113px;">(1,490,070)</div>
<div class="n" style="left:548.61px;top:317.3px;padding-right:1.8px;color:#FFFFFF;letter-spacing:0.113px;">(1,486,706)</div>
<div class="n" style="left:599.11px;top:317.3px;padding-right:1.8px;color:#FFFFFF;letter-spacing:0.113px;">(1,483,342)</div>
<div class="n" style="left:649.61px;top:317.3px;padding-right:1.8px;color:#FFFFFF;letter-spacing:0.113px;">(1,479,979)</div>
<div class="n" style="left:700.11px;top:317.3px;padding-right:1.8px;color:#FFFFFF;letter-spacing:0.113px;">(1,476,615)</div>
<div class="n" style="left:750.61px;top:317.3px;padding-right:1.8px;color:#FFFFFF;letter-spacing:0.113px;">(1,473,252)</div>
<div class="n" style="left:801.11px;top:317.3px;padding-right:1.8px;color:#FFFFFF;letter-spacing:0.113px;">(1,469,888)</div>
<div class="n" style="left:851.61px;top:317.3px;padding-right:1.8px;color:#FFFFFF;letter-spacing:0.113px;">(1,328,483)</div>
<div class="n" style="left:902.11px;top:317.3px;padding-right:1.8px;color:#FFFFFF;letter-spacing:0.113px;">(1,462,236)</div>
<div class="n" style="left:952.61px;top:317.3px;padding-right:1.8px;color:#FFFFFF;letter-spacing:0.113px;">(1,458,872)</div>
<div class="c" style="left:49.0px;top:329.8px;color:#4A7DBA;letter-spacing:0.144px;">Net Cash Flow from Operating Activities</div>
<div class="n" style="left:245.62px;top:329.8px;padding-right:4.2px;color:#4677B5;letter-spacing:0.119px;">2,166,478</div>
<div class="n" style="left:296.12px;top:329.8px;padding-right:4.2px;color:#4677B5;letter-spacing:0.119px;">2,718,406</div>
<div class="n" style="left:346.62px;top:329.8px;padding-right:4.2px;color:#4677B5;letter-spacing:0.119px;">2,721,770</div>
<div class="n" style="left:397.12px;top:329.8px;padding-right:4.2px;color:#4677B5;letter-spacing:0.119px;">2,725,133</div>
<div class="n" style="left:447.62px;top:329.8px;padding-right:4.2px;color:#4677B5;letter-spacing:0.119px;">2,728,497</div>
<div class="n" style="left:498.12px;top:329.8px;padding-right:4.2px;color:#4677B5;letter-spacing:0.119px;">2,731,860</div>
<div class="n" style="left:548.62px;top:329.8px;padding-right:4.2px;color:#4677B5;letter-spacing:0.119px;">2,735,224</div>
<div class="n" style="left:599.12px;top:329.8px;padding-right:4.2px;color:#4677B5;letter-spacing:0.119px;">2,738,588</div>
<div class="n" style="left:649.62px;top:329.8px;padding-right:4.2px;color:#4677B5;letter-spacing:0.119px;">2,741,951</div>
<div class="n" style="left:700.12px;top:329.8px;padding-right:4.2px;color:#4677B5;letter-spacing:0.119px;">2,745,315</div>
<div class="n" style="left:750.62px;top:329.8px;padding-right:4.2px;color:#4677B5;letter-spacing:0.119px;">2,748,678</div>
<div class="n" style="left:801.12px;top:329.8px;padding-right:4.2px;color:#4677B5;letter-spacing:0.119px;">2,752,042</div>
<div class="n" style="left:851.62px;top:329.8px;padding-right:4.2px;color:#4677B5;letter-spacing:0.119px;">2,207,867</div>
<div class="n" style="left:902.12px;top:329.8px;padding-right:4.2px;color:#4677B5;letter-spacing:0.119px;">2,759,694</div>
<div class="n" style="left:952.62px;top:329.8px;padding-right:4.2px;color:#4677B5;letter-spacing:0.119px;">2,763,058</div>
<div class="c" style="left:49.0px;top:342.3px;color:#4A7DBA;letter-spacing:0.156px;">Net Cash Flow from Operating Activities (Indirect)</div>
<div class="n" style="left:245.62px;top:342.3px;padding-right:4.2px;color:#4677B5;letter-spacing:0.119px;">2,164,767</div>
<div class="n" style="left:296.12px;top:342.3px;padding-right:4.2px;color:#4677B5;letter-spacing:0.119px;">2,716,695</div>
<div class="n" style="left:346.62px;top:342.3px;padding-right:4.2px;color:#4677B5;letter-spacing:0.119px;">2,720,059</div>
<div class="n" style="left:397.12px;top:342.3px;padding-right:4.2px;color:#4677B5;letter-spacing:0.119px;">2,723,422</div>
<div class="n" style="left:447.62px;top:342.3px;padding-right:4.2px;color:#4677B5;letter-spacing:0.119px;">2,726,786</div>
<div class="n" style="left:498.12px;top:342.3px;padding-right:4.2px;color:#4677B5;letter-spacing:0.119px;">2,730,149</div>
<div class="n" style="left:548.62px;top:342.3px;padding-right:4.2px;color:#4677B5;letter-spacing:0.119px;">2,733,513</div>
<div class="n" style="left:599.12px;top:342.3px;padding-right:4.2px;color:#4677B5;letter-spacing:0.119px;">2,736,877</div>
<div class="n" style="left:649.62px;top:342.3px;padding-right:4.2px;color:#4677B5;letter-spacing:0.119px;">2,740,240</div>
<div class="n" style="left:700.12px;top:342.3px;padding-right:4.2px;color:#4677B5;letter-spacing:0.119px;">2,743,604</div>
<div class="n" style="left:750.62px;top:342.3px;padding-right:4.2px;color:#4677B5;letter-spacing:0.119px;">2,746,967</div>
<div class="n" style="left:801.12px;top:342.3px;padding-right:4.2px;color:#4677B5;letter-spacing:0.119px;">2,750,331</div>
<div class="n" style="left:851.62px;top:342.3px;padding-right:4.2px;color:#4677B5;letter-spacing:0.119px;">2,206,417</div>
<div class="n" style="left:902.12px;top:342.3px;padding-right:4.2px;color:#4677B5;letter-spacing:0.119px;">2,758,244</div>
<div class="n" style="left:952.62px;top:342.3px;padding-right:4.2px;color:#4677B5;letter-spacing:0.119px;">2,761,608</div>
<div class="c" style="left:49.0px;top:354.8px;color:#22508A;letter-spacing:-0.108px;font-weight:700;">Cash Flow from Investing Activities</div>
<div class="c" style="left:56.0px;top:367.3px;color:#4A7DBA;letter-spacing:0.053px;">Fixed Assets Capital Expenditure</div>
<div class="n" style="left:245.62px;top:367.3px;padding-right:4.2px;color:#4677B5;letter-spacing:0.119px;">3,450,000</div>
<div class="n" style="left:296.11px;top:367.3px;padding-right:5.4px;color:#4677B5;letter-spacing:0.110px;opacity:.5;">-</div>
<div class="n" style="left:346.61px;top:367.3px;padding-right:5.4px;color:#4677B5;letter-spacing:0.110px;opacity:.5;">-</div>
<div class="n" style="left:397.11px;top:367.3px;padding-right:5.4px;color:#4677B5;letter-spacing:0.110px;opacity:.5;">-</div>
<div class="n" style="left:447.61px;top:367.3px;padding-right:5.4px;color:#4677B5;letter-spacing:0.110px;opacity:.5;">-</div>
<div class="n" style="left:498.11px;top:367.3px;padding-right:5.4px;color:#4677B5;letter-spacing:0.110px;opacity:.5;">-</div>
<div class="n" style="left:548.61px;top:367.3px;padding-right:5.4px;color:#4677B5;letter-spacing:0.110px;opacity:.5;">-</div>
<div class="n" style="left:599.11px;top:367.3px;padding-right:5.4px;color:#4677B5;letter-spacing:0.110px;opacity:.5;">-</div>
<div class="n" style="left:649.61px;top:367.3px;padding-right:5.4px;color:#4677B5;letter-spacing:0.110px;opacity:.5;">-</div>
<div class="n" style="left:700.11px;top:367.3px;padding-right:5.4px;color:#4677B5;letter-spacing:0.110px;opacity:.5;">-</div>
<div class="n" style="left:750.61px;top:367.3px;padding-right:5.4px;color:#4677B5;letter-spacing:0.110px;opacity:.5;">-</div>
<div class="n" style="left:801.11px;top:367.3px;padding-right:5.4px;color:#4677B5;letter-spacing:0.110px;opacity:.5;">-</div>
<div class="n" style="left:851.61px;top:367.3px;padding-right:5.4px;color:#4677B5;letter-spacing:0.110px;opacity:.5;">-</div>
<div class="n" style="left:902.11px;top:367.3px;padding-right:5.4px;color:#4677B5;letter-spacing:0.110px;opacity:.5;">-</div>
<div class="n" style="left:952.61px;top:367.3px;padding-right:5.4px;color:#4677B5;letter-spacing:0.110px;opacity:.5;">-</div>
<div class="c" style="left:68.0px;top:379.8px;color:#4A7DBA;letter-spacing:0.092px;">Placeholder 1</div>
<div class="n" style="left:296.11px;top:379.8px;padding-right:5.4px;color:#4677B5;letter-spacing:0.110px;opacity:.5;">-</div>
<div class="n" style="left:346.61px;top:379.8px;padding-right:5.4px;color:#4677B5;letter-spacing:0.110px;opacity:.5;">-</div>
<div class="n" style="left:397.11px;top:379.8px;padding-right:5.4px;color:#4677B5;letter-spacing:0.110px;opacity:.5;">-</div>
<div class="n" style="left:447.61px;top:379.8px;padding-right:5.4px;color:#4677B5;letter-spacing:0.110px;opacity:.5;">-</div>
<div class="n" style="left:498.11px;top:379.8px;padding-right:5.4px;color:#4677B5;letter-spacing:0.110px;opacity:.5;">-</div>
<div class="n" style="left:548.61px;top:379.8px;padding-right:5.4px;color:#4677B5;letter-spacing:0.110px;opacity:.5;">-</div>
<div class="n" style="left:599.11px;top:379.8px;padding-right:5.4px;color:#4677B5;letter-spacing:0.110px;opacity:.5;">-</div>
<div class="n" style="left:649.61px;top:379.8px;padding-right:5.4px;color:#4677B5;letter-spacing:0.110px;opacity:.5;">-</div>
<div class="n" style="left:700.11px;top:379.8px;padding-right:5.4px;color:#4677B5;letter-spacing:0.110px;opacity:.5;">-</div>
<div class="n" style="left:750.61px;top:379.8px;padding-right:5.4px;color:#4677B5;letter-spacing:0.110px;opacity:.5;">-</div>
<div class="n" style="left:801.11px;top:379.8px;padding-right:5.4px;color:#4677B5;letter-spacing:0.110px;opacity:.5;">-</div>
<div class="n" style="left:851.61px;top:379.8px;padding-right:5.4px;color:#4677B5;letter-spacing:0.110px;opacity:.5;">-</div>
<div class="n" style="left:902.11px;top:379.8px;padding-right:5.4px;color:#4677B5;letter-spacing:0.110px;opacity:.5;">-</div>
<div class="n" style="left:952.61px;top:379.8px;padding-right:5.4px;color:#4677B5;letter-spacing:0.110px;opacity:.5;">-</div>
<div class="c" style="left:56.0px;top:392.3px;color:#4A7DBA;letter-spacing:0.132px;">Net Cash Flow from Investing Activities</div>
<div class="n" style="left:245.62px;top:392.3px;padding-right:4.2px;color:#4677B5;letter-spacing:0.119px;">3,450,000</div>
<div class="n" style="left:296.11px;top:392.3px;padding-right:5.4px;color:#4677B5;letter-spacing:0.110px;opacity:.5;">-</div>
<div class="n" style="left:346.61px;top:392.3px;padding-right:5.4px;color:#4677B5;letter-spacing:0.110px;opacity:.5;">-</div>
<div class="n" style="left:397.11px;top:392.3px;padding-right:5.4px;color:#4677B5;letter-spacing:0.110px;opacity:.5;">-</div>
<div class="n" style="left:447.61px;top:392.3px;padding-right:5.4px;color:#4677B5;letter-spacing:0.110px;opacity:.5;">-</div>
<div class="n" style="left:498.11px;top:392.3px;padding-right:5.4px;color:#4677B5;letter-spacing:0.110px;opacity:.5;">-</div>
<div class="n" style="left:548.61px;top:392.3px;padding-right:5.4px;color:#4677B5;letter-spacing:0.110px;opacity:.5;">-</div>
<div class="n" style="left:599.11px;top:392.3px;padding-right:5.4px;color:#4677B5;letter-spacing:0.110px;opacity:.5;">-</div>
<div class="n" style="left:649.61px;top:392.3px;padding-right:5.4px;color:#4677B5;letter-spacing:0.110px;opacity:.5;">-</div>
<div class="n" style="left:700.11px;top:392.3px;padding-right:5.4px;color:#4677B5;letter-spacing:0.110px;opacity:.5;">-</div>
<div class="n" style="left:750.61px;top:392.3px;padding-right:5.4px;color:#4677B5;letter-spacing:0.110px;opacity:.5;">-</div>
<div class="n" style="left:801.11px;top:392.3px;padding-right:5.4px;color:#4677B5;letter-spacing:0.110px;opacity:.5;">-</div>
<div class="n" style="left:851.61px;top:392.3px;padding-right:5.4px;color:#4677B5;letter-spacing:0.110px;opacity:.5;">-</div>
<div class="n" style="left:902.11px;top:392.3px;padding-right:5.4px;color:#4677B5;letter-spacing:0.110px;opacity:.5;">-</div>
<div class="n" style="left:952.61px;top:392.3px;padding-right:5.4px;color:#4677B5;letter-spacing:0.110px;opacity:.5;">-</div>
<div class="c" style="left:49.0px;top:404.8px;color:#22508A;letter-spacing:-0.142px;font-weight:700;">Cash Flow from Financing Activities</div>
<div class="n" style="left:296.11px;top:404.8px;padding-right:5.4px;color:#4677B5;letter-spacing:0.110px;opacity:.5;">-</div>
<div class="n" style="left:346.61px;top:404.8px;padding-right:5.4px;color:#4677B5;letter-spacing:0.110px;opacity:.5;">-</div>
<div class="n" style="left:397.11px;top:404.8px;padding-right:5.4px;color:#4677B5;letter-spacing:0.110px;opacity:.5;">-</div>
<div class="n" style="left:447.61px;top:404.8px;padding-right:5.4px;color:#4677B5;letter-spacing:0.110px;opacity:.5;">-</div>
<div class="n" style="left:498.11px;top:404.8px;padding-right:5.4px;color:#4677B5;letter-spacing:0.110px;opacity:.5;">-</div>
<div class="n" style="left:548.61px;top:404.8px;padding-right:5.4px;color:#4677B5;letter-spacing:0.110px;opacity:.5;">-</div>
<div class="n" style="left:599.11px;top:404.8px;padding-right:5.4px;color:#4677B5;letter-spacing:0.110px;opacity:.5;">-</div>
<div class="n" style="left:649.61px;top:404.8px;padding-right:5.4px;color:#4677B5;letter-spacing:0.110px;opacity:.5;">-</div>
<div class="n" style="left:700.11px;top:404.8px;padding-right:5.4px;color:#4677B5;letter-spacing:0.110px;opacity:.5;">-</div>
<div class="n" style="left:750.61px;top:404.8px;padding-right:5.4px;color:#4677B5;letter-spacing:0.110px;opacity:.5;">-</div>
<div class="n" style="left:801.11px;top:404.8px;padding-right:5.4px;color:#4677B5;letter-spacing:0.110px;opacity:.5;">-</div>
<div class="n" style="left:851.61px;top:404.8px;padding-right:5.4px;color:#4677B5;letter-spacing:0.110px;opacity:.5;">-</div>
<div class="n" style="left:902.11px;top:404.8px;padding-right:5.4px;color:#4677B5;letter-spacing:0.110px;opacity:.5;">-</div>
<div class="n" style="left:952.61px;top:404.8px;padding-right:5.4px;color:#4677B5;letter-spacing:0.110px;opacity:.5;">-</div>
<div class="c" style="left:56.0px;top:417.3px;color:#4A7DBA;letter-spacing:0.207px;">Debt Drawdowns</div>
<div class="n" style="left:245.61px;top:417.3px;padding-right:1.8px;color:#4677B5;letter-spacing:0.113px;">(3,450,000)</div>
<div class="n" style="left:296.11px;top:417.3px;padding-right:5.4px;color:#4677B5;letter-spacing:0.110px;opacity:.5;">-</div>
<div class="n" style="left:346.61px;top:417.3px;padding-right:5.4px;color:#4677B5;letter-spacing:0.110px;opacity:.5;">-</div>
<div class="n" style="left:397.11px;top:417.3px;padding-right:5.4px;color:#4677B5;letter-spacing:0.110px;opacity:.5;">-</div>
<div class="n" style="left:447.61px;top:417.3px;padding-right:5.4px;color:#4677B5;letter-spacing:0.110px;opacity:.5;">-</div>
<div class="n" style="left:498.11px;top:417.3px;padding-right:5.4px;color:#4677B5;letter-spacing:0.110px;opacity:.5;">-</div>
<div class="n" style="left:548.61px;top:417.3px;padding-right:5.4px;color:#4677B5;letter-spacing:0.110px;opacity:.5;">-</div>
<div class="n" style="left:599.11px;top:417.3px;padding-right:5.4px;color:#4677B5;letter-spacing:0.110px;opacity:.5;">-</div>
<div class="n" style="left:649.61px;top:417.3px;padding-right:5.4px;color:#4677B5;letter-spacing:0.110px;opacity:.5;">-</div>
<div class="n" style="left:700.11px;top:417.3px;padding-right:5.4px;color:#4677B5;letter-spacing:0.110px;opacity:.5;">-</div>
<div class="n" style="left:750.61px;top:417.3px;padding-right:5.4px;color:#4677B5;letter-spacing:0.110px;opacity:.5;">-</div>
<div class="n" style="left:801.11px;top:417.3px;padding-right:5.4px;color:#4677B5;letter-spacing:0.110px;opacity:.5;">-</div>
<div class="n" style="left:851.61px;top:417.3px;padding-right:5.4px;color:#4677B5;letter-spacing:0.110px;opacity:.5;">-</div>
<div class="n" style="left:902.11px;top:417.3px;padding-right:5.4px;color:#4677B5;letter-spacing:0.110px;opacity:.5;">-</div>
<div class="n" style="left:952.61px;top:417.3px;padding-right:5.4px;color:#4677B5;letter-spacing:0.110px;opacity:.5;">-</div>
<div class="c" style="left:68.0px;top:429.8px;color:#4A7DBA;letter-spacing:0.092px;">Placeholder 1</div>
<div class="n" style="left:296.11px;top:429.8px;padding-right:5.4px;color:#4677B5;letter-spacing:0.110px;opacity:.5;">-</div>
<div class="n" style="left:346.61px;top:429.8px;padding-right:5.4px;color:#4677B5;letter-spacing:0.110px;opacity:.5;">-</div>
<div class="n" style="left:397.11px;top:429.8px;padding-right:5.4px;color:#4677B5;letter-spacing:0.110px;opacity:.5;">-</div>
<div class="n" style="left:447.61px;top:429.8px;padding-right:5.4px;color:#4677B5;letter-spacing:0.110px;opacity:.5;">-</div>
<div class="n" style="left:498.11px;top:429.8px;padding-right:5.4px;color:#4677B5;letter-spacing:0.110px;opacity:.5;">-</div>
<div class="n" style="left:548.61px;top:429.8px;padding-right:5.4px;color:#4677B5;letter-spacing:0.110px;opacity:.5;">-</div>
<div class="n" style="left:599.11px;top:429.8px;padding-right:5.4px;color:#4677B5;letter-spacing:0.110px;opacity:.5;">-</div>
<div class="n" style="left:649.61px;top:429.8px;padding-right:5.4px;color:#4677B5;letter-spacing:0.110px;opacity:.5;">-</div>
<div class="n" style="left:700.11px;top:429.8px;padding-right:5.4px;color:#4677B5;letter-spacing:0.110px;opacity:.5;">-</div>
<div class="n" style="left:750.61px;top:429.8px;padding-right:5.4px;color:#4677B5;letter-spacing:0.110px;opacity:.5;">-</div>
<div class="n" style="left:801.11px;top:429.8px;padding-right:5.4px;color:#4677B5;letter-spacing:0.110px;opacity:.5;">-</div>
<div class="n" style="left:851.61px;top:429.8px;padding-right:5.4px;color:#4677B5;letter-spacing:0.110px;opacity:.5;">-</div>
<div class="n" style="left:902.11px;top:429.8px;padding-right:5.4px;color:#4677B5;letter-spacing:0.110px;opacity:.5;">-</div>
<div class="n" style="left:952.61px;top:429.8px;padding-right:5.4px;color:#4677B5;letter-spacing:0.110px;opacity:.5;">-</div>
<div class="c" style="left:68.0px;top:442.3px;color:#4A7DBA;letter-spacing:0.092px;">Placeholder 2</div>
<div class="n" style="left:296.11px;top:442.3px;padding-right:5.4px;color:#4677B5;letter-spacing:0.110px;opacity:.5;">-</div>
<div class="n" style="left:346.61px;top:442.3px;padding-right:5.4px;color:#4677B5;letter-spacing:0.110px;opacity:.5;">-</div>
<div class="n" style="left:397.11px;top:442.3px;padding-right:5.4px;color:#4677B5;letter-spacing:0.110px;opacity:.5;">-</div>
<div class="n" style="left:447.61px;top:442.3px;padding-right:5.4px;color:#4677B5;letter-spacing:0.110px;opacity:.5;">-</div>
<div class="n" style="left:498.11px;top:442.3px;padding-right:5.4px;color:#4677B5;letter-spacing:0.110px;opacity:.5;">-</div>
<div class="n" style="left:548.61px;top:442.3px;padding-right:5.4px;color:#4677B5;letter-spacing:0.110px;opacity:.5;">-</div>
<div class="n" style="left:599.11px;top:442.3px;padding-right:5.4px;color:#4677B5;letter-spacing:0.110px;opacity:.5;">-</div>
<div class="n" style="left:649.61px;top:442.3px;padding-right:5.4px;color:#4677B5;letter-spacing:0.110px;opacity:.5;">-</div>
<div class="n" style="left:700.11px;top:442.3px;padding-right:5.4px;color:#4677B5;letter-spacing:0.110px;opacity:.5;">-</div>
<div class="n" style="left:750.61px;top:442.3px;padding-right:5.4px;color:#4677B5;letter-spacing:0.110px;opacity:.5;">-</div>
<div class="n" style="left:801.11px;top:442.3px;padding-right:5.4px;color:#4677B5;letter-spacing:0.110px;opacity:.5;">-</div>
<div class="n" style="left:851.61px;top:442.3px;padding-right:5.4px;color:#4677B5;letter-spacing:0.110px;opacity:.5;">-</div>
<div class="n" style="left:902.11px;top:442.3px;padding-right:5.4px;color:#4677B5;letter-spacing:0.110px;opacity:.5;">-</div>
<div class="n" style="left:952.61px;top:442.3px;padding-right:5.4px;color:#4677B5;letter-spacing:0.110px;opacity:.5;">-</div>
<div class="c" style="left:68.0px;top:454.8px;color:#4A7DBA;letter-spacing:0.092px;">Placeholder 3</div>
<div class="n" style="left:296.11px;top:454.8px;padding-right:5.4px;color:#4677B5;letter-spacing:0.110px;opacity:.5;">-</div>
<div class="n" style="left:346.61px;top:454.8px;padding-right:5.4px;color:#4677B5;letter-spacing:0.110px;opacity:.5;">-</div>
<div class="n" style="left:397.11px;top:454.8px;padding-right:5.4px;color:#4677B5;letter-spacing:0.110px;opacity:.5;">-</div>
<div class="n" style="left:447.61px;top:454.8px;padding-right:5.4px;color:#4677B5;letter-spacing:0.110px;opacity:.5;">-</div>
<div class="n" style="left:498.11px;top:454.8px;padding-right:5.4px;color:#4677B5;letter-spacing:0.110px;opacity:.5;">-</div>
<div class="n" style="left:548.61px;top:454.8px;padding-right:5.4px;color:#4677B5;letter-spacing:0.110px;opacity:.5;">-</div>
<div class="n" style="left:599.11px;top:454.8px;padding-right:5.4px;color:#4677B5;letter-spacing:0.110px;opacity:.5;">-</div>
<div class="n" style="left:649.61px;top:454.8px;padding-right:5.4px;color:#4677B5;letter-spacing:0.110px;opacity:.5;">-</div>
<div class="n" style="left:700.11px;top:454.8px;padding-right:5.4px;color:#4677B5;letter-spacing:0.110px;opacity:.5;">-</div>
<div class="n" style="left:750.61px;top:454.8px;padding-right:5.4px;color:#4677B5;letter-spacing:0.110px;opacity:.5;">-</div>
<div class="n" style="left:801.11px;top:454.8px;padding-right:5.4px;color:#4677B5;letter-spacing:0.110px;opacity:.5;">-</div>
<div class="n" style="left:851.61px;top:454.8px;padding-right:5.4px;color:#4677B5;letter-spacing:0.110px;opacity:.5;">-</div>
<div class="n" style="left:902.11px;top:454.8px;padding-right:5.4px;color:#4677B5;letter-spacing:0.110px;opacity:.5;">-</div>
<div class="n" style="left:952.61px;top:454.8px;padding-right:5.4px;color:#4677B5;letter-spacing:0.110px;opacity:.5;">-</div>
<div class="c" style="left:56.0px;top:467.3px;color:#4A7DBA;letter-spacing:0.107px;">Debt Repayments</div>
<div class="n" style="left:296.11px;top:467.3px;padding-right:1.8px;color:#4677B5;letter-spacing:0.115px;">(16,818)</div>
<div class="n" style="left:346.61px;top:467.3px;padding-right:1.8px;color:#4677B5;letter-spacing:0.115px;">(16,818)</div>
<div class="n" style="left:397.11px;top:467.3px;padding-right:1.8px;color:#4677B5;letter-spacing:0.115px;">(16,818)</div>
<div class="n" style="left:447.61px;top:467.3px;padding-right:1.8px;color:#4677B5;letter-spacing:0.115px;">(16,818)</div>
<div class="n" style="left:498.11px;top:467.3px;padding-right:1.8px;color:#4677B5;letter-spacing:0.115px;">(16,818)</div>
<div class="n" style="left:548.61px;top:467.3px;padding-right:1.8px;color:#4677B5;letter-spacing:0.115px;">(16,818)</div>
<div class="n" style="left:599.11px;top:467.3px;padding-right:1.8px;color:#4677B5;letter-spacing:0.115px;">(16,818)</div>
<div class="n" style="left:649.61px;top:467.3px;padding-right:1.8px;color:#4677B5;letter-spacing:0.115px;">(16,818)</div>
<div class="n" style="left:700.11px;top:467.3px;padding-right:1.8px;color:#4677B5;letter-spacing:0.115px;">(16,818)</div>
<div class="n" style="left:750.61px;top:467.3px;padding-right:1.8px;color:#4677B5;letter-spacing:0.115px;">(16,818)</div>
<div class="n" style="left:801.11px;top:467.3px;padding-right:1.8px;color:#4677B5;letter-spacing:0.115px;">(16,818)</div>
<div class="n" style="left:851.61px;top:467.3px;padding-right:1.8px;color:#4677B5;letter-spacing:0.115px;">(16,818)</div>
<div class="n" style="left:902.11px;top:467.3px;padding-right:1.8px;color:#4677B5;letter-spacing:0.115px;">(16,818)</div>
<div class="n" style="left:952.61px;top:467.3px;padding-right:1.8px;color:#4677B5;letter-spacing:0.115px;">(16,818)</div>
<div class="c" style="left:68.0px;top:479.8px;color:#4A7DBA;letter-spacing:0.092px;">Placeholder 1</div>
<div class="c" style="left:56.0px;top:492.3px;color:#9fb4cf;letter-spacing:0.067px;">Ordinary Equity Raising</div>
</div>
<svg class="a" style="left:991.2px;top:54.3px" width="6" height="4.5" viewBox="0 0 8 6"><path d="M0.6 5 L4 1 L7.4 5 Z" fill="#6b6b6b"/></svg>
<div class="a" style="left:991.3px;top:62.5px;width:5.4px;height:290px;background:#707070;border-radius:2.7px"></div>
<svg class="a" style="left:991.2px;top:553px" width="6" height="4.5" viewBox="0 0 8 6"><path d="M0.6 1 L4 5 L7.4 1 Z" fill="#6b6b6b"/></svg>
<div id="tabs" class="a"></div>
<div class="a" style="left:232.5px;top:557px;width:44px;height:20.3px;background:#fff"></div>
<div class="a" style="left:238px;top:574.4px;width:33.2px;height:1.1px;background:#3d9a68"></div>
<svg class="a" style="left:16px;top:563px" width="6" height="10" viewBox="0 0 6 10"><path d="M4.6 1.2 L1.4 5 L4.6 8.8" fill="none" stroke="#c4c4c4" stroke-width="1.1"/></svg>
<svg class="a" style="left:36px;top:563px" width="6" height="10" viewBox="0 0 6 10"><path d="M1.4 1.2 L4.6 5 L1.4 8.8" fill="none" stroke="#7a7a7a" stroke-width="1.1"/></svg>
<div class="tab pill" style="left:72px;width:45px"></div>
<div class="tab tt" style="left:78.2px;letter-spacing:-0.003px;font-size:9.7px;">How To</div>
<div class="tab y" style="left:121px;width:60px"></div>
<div class="tab tt" style="left:126.9px;letter-spacing:-0.209px;font-size:9.7px;">Inputs 2025</div>
<div class="tab y" style="left:186px;width:42px"></div>
<div class="tab tt" style="left:191.4px;letter-spacing:-0.363px;font-size:9.7px;">IS 2025</div>
<div class="tab tt" style="left:237.8px;letter-spacing:-0.227px;font-size:9.2px;font-weight:700;color:#1a1a1a;top:559.7px;">CF 2025</div>
<div class="tab pill" style="left:280px;width:48px"></div>
<div class="tab tt" style="left:287.1px;letter-spacing:-0.645px;font-size:9.7px;">BS 2025</div>
<div class="tab pill" style="left:332px;width:120px"></div>
<div class="tab tt" style="left:337.5px;letter-spacing:-0.371px;font-size:9.7px;">Statements Summary 2025</div>
<div class="tab y" style="left:458px;width:60.5px"></div>
<div class="tab tt" style="left:464.0px;letter-spacing:-0.786px;font-size:9.7px;">CAPEX 2025</div>
<div class="tab y" style="left:525.5px;width:54.0px"></div>
<div class="tab tt" style="left:530.4px;letter-spacing:-0.792px;font-size:9.7px;">OPEX 2025</div>
<div class="tab y" style="left:586px;width:61px"></div>
<div class="tab tt" style="left:591.9px;letter-spacing:-0.236px;font-size:9.7px;">Inputs 2026</div>
<div class="tab y" style="left:651.5px;width:40.5px"></div>
<div class="tab tt" style="left:657.1px;letter-spacing:-0.491px;font-size:9.7px;">IS 2026</div>
<div class="tab y" style="left:696.5px;width:44.5px"></div>
<div class="tab tt" style="left:702.8px;letter-spacing:-0.558px;font-size:9.7px;">CF 2026</div>
<div class="tab pill" style="left:746px;width:45px"></div>
<div class="tab tt" style="left:751.9px;letter-spacing:-0.588px;font-size:9.7px;">BS 2026</div>
<div class="tab pill" style="left:797px;width:86px"></div>
<div class="tab tt" style="left:802.7px;width:77.6px;overflow:hidden;letter-spacing:-0.442px;font-size:9.7px">Statements Summary 2026</div>
<div class="t" style="left:885px;top:563px;font-size:9px;color:#444;line-height:9px;letter-spacing:0.3px;font-weight:700">...</div>
<div class="a" style="left:907.5px;top:568.2px;width:7.8px;height:1.1px;background:#444"></div><div class="a" style="left:910.85px;top:564.8px;width:1.1px;height:7.8px;background:#444"></div>
<div class="a" style="left:931px;top:565.4px;width:1.6px;height:1.6px;background:#666"></div>
<div class="a" style="left:931px;top:568.3px;width:1.6px;height:1.6px;background:#666"></div>
<div class="a" style="left:931px;top:571.2px;width:1.6px;height:1.6px;background:#666"></div>
<svg class="a" style="left:945.6px;top:565.5px" width="5.5" height="7" viewBox="0 0 5 7"><path d="M4.4 0.6 L0.8 3.5 L4.4 6.4 Z" fill="#555"/></svg>
<div class="a" style="left:953.6px;top:565.8px;width:21.2px;height:6.2px;background:#6f6f6f;border-radius:3.1px"></div>
<svg class="a" style="left:980.3px;top:565.5px" width="5.5" height="7" viewBox="0 0 5 7"><path d="M0.6 0.6 L4.2 3.5 L0.6 6.4 Z" fill="#555"/></svg>
<div id="status" class="a"></div>
<div class="st" style="left:8px;top:583.7px">Ready</div>
<svg class="a" style="left:40px;top:582.5px" width="11" height="9" viewBox="0 0 11 9">
<rect x="0.6" y="0.6" width="9.8" height="7.8" fill="none" stroke="#555" stroke-width="0.9"/>
<line x1="0.6" y1="3" x2="10.4" y2="3" stroke="#555" stroke-width="0.8"/><line x1="4" y1="3" x2="4" y2="8.4" stroke="#555" stroke-width="0.8"/><line x1="7.2" y1="3" x2="7.2" y2="8.4" stroke="#555" stroke-width="0.8"/>
<line x1="0.6" y1="5.7" x2="10.4" y2="5.7" stroke="#555" stroke-width="0.8"/></svg>
<svg class="a" style="left:60px;top:581.3px" width="10" height="9" viewBox="0 0 10 9">
<circle cx="5" cy="1.6" r="1.1" fill="#444"/><path d="M1 3.2 H9 M5 3.2 V5.6 M5 5.6 L2.8 8.6 M5 5.6 L7.2 8.6" stroke="#444" stroke-width="1" fill="none"/></svg>
<div class="st" style="left:72px;top:583.5px;font-weight:700;color:#222;font-size:6.6px">Accessibility: Investigate</div>
<div class="a" style="left:810px;top:579px;width:18px;height:11px;background:#dcdcdc"></div>
<svg class="a" style="left:814px;top:582.5px" width="10" height="9" viewBox="0 0 10 9">
<rect x="0.6" y="0.6" width="8.8" height="7.8" fill="none" stroke="#444" stroke-width="0.9"/>
<path d="M0.6 3.2 H9.4 M0.6 5.8 H9.4 M3.5 0.6 V8.4 M6.5 0.6 V8.4" stroke="#444" stroke-width="0.8" fill="none"/></svg>
<svg class="a" style="left:841px;top:582.5px" width="10" height="9" viewBox="0 0 10 9">
<rect x="0.6" y="0.6" width="8.8" height="7.8" fill="none" stroke="#444" stroke-width="0.9"/>
<rect x="2.6" y="2.4" width="4.8" height="6" fill="none" stroke="#444" stroke-width="0.8"/></svg>
<svg class="a" style="left:866.5px;top:582.5px" width="10" height="9" viewBox="0 0 10 9">
<rect x="0.6" y="0.6" width="8.8" height="7.8" fill="none" stroke="#444" stroke-width="0.9"/>
<path d="M0.6 4.5 H5 V8.4 M5 4.5 V0.6" stroke="#444" stroke-width="0.8" fill="none"/></svg>
<div class="a" style="left:887.5px;top:586.3px;width:5px;height:1px;background:#555"></div>
<div class="a" style="left:896px;top:586.3px;width:69.5px;height:1px;background:#8a8a8a"></div>
<div class="a" style="left:928px;top:582.5px;width:2.4px;height:7.5px;background:#444"></div>
<div class="a" style="left:965.2px;top:586.3px;width:4px;height:1px;background:#777"></div><div class="a" style="left:966.7px;top:584.8px;width:1px;height:4px;background:#777"></div>
<div class="st" style="left:978.6px;top:582.5px;font-size:6.1px;color:#6d6d6d;top:583.6px">100%</div>
</body></html>
